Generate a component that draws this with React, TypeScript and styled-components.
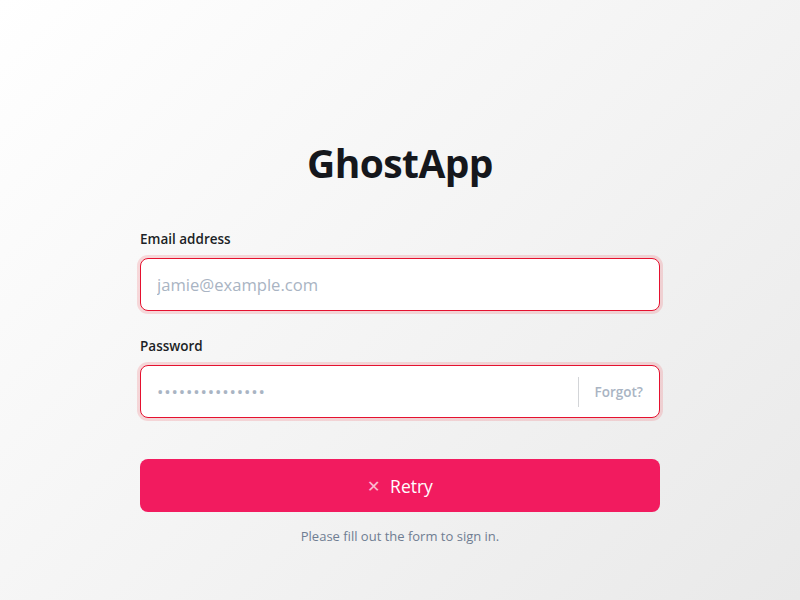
import React from "react";
import styled, { createGlobalStyle } from "styled-components";

const Global = createGlobalStyle`
  html, body { margin: 0; padding: 0; height: 100%; }
  body {
    background: linear-gradient(135deg, #ffffff 0%, #f4f4f4 50%, #e9e9e9 100%);
    font-family: "Segoe UI", "Open Sans", "Noto Sans", sans-serif;
    min-height: 600px;
  }
`;

const Page = styled.div`
  width: 800px;
  height: 600px;
  display: flex;
  justify-content: center;
`;

const Form = styled.form`
  width: 520px;
  padding-top: 139px;
  display: flex;
  flex-direction: column;
`;

const Title = styled.h1`
  margin: 0 0 42px;
  font-size: 39px;
  line-height: 48px;
  font-weight: 700;
  text-align: center;
  color: #15171c;
  letter-spacing: -0.6px;
`;

const Field = styled.div<{ $gap?: number }>`
  display: flex;
  flex-direction: column;
  gap: 9px;
  margin-bottom: ${(p) => p.$gap ?? 25}px;
`;

const Label = styled.label`
  font-size: 13.5px;
  line-height: 20px;
  font-weight: 600;
  color: #1c1f26;
`;

const InputBox = styled.div`
  height: 53px;
  box-sizing: border-box;
  border: 1px solid #e5112f;
  border-radius: 8px;
  background: #fff;
  box-shadow: 0 0 0 3px rgba(239, 68, 80, 0.18);
  display: flex;
  align-items: center;
`;

const Input = styled.input<{ $dots?: boolean }>`
  flex: 1;
  min-width: 0;
  height: 100%;
  border: none;
  outline: none;
  background: transparent;
  padding: 0 16px;
  font-family: inherit;
  font-size: 16.6px;
  color: #1c1f26;
  letter-spacing: ${(p) => (p.$dots ? "0.85px" : "0")};
  &::placeholder {
    color: #a9b4c3;
    font-size: ${(p) => (p.$dots ? "17px" : "16.6px")};
  }
`;

const Divider = styled.span`
  width: 1px;
  height: 30px;
  background: #d3d5d8;
`;

const Forgot = styled.a`
  padding: 0 16px;
  font-size: 13.5px;
  font-weight: 600;
  color: #a9b4c3;
  text-decoration: none;
  cursor: pointer;
`;

const Button = styled.button`
  margin-top: 16px;
  height: 53px;
  border: none;
  border-radius: 8px;
  background: #f21b5f;
  color: #fff;
  font-family: inherit;
  font-size: 17.5px;
  display: flex;
  align-items: center;
  justify-content: center;
  gap: 10px;
  cursor: pointer;
`;

const XMark = styled.span`
  font-size: 16px;
  opacity: 0.7;
  line-height: 1;
`;

const Helper = styled.p`
  margin: 14px 0 0;
  font-size: 13px;
  line-height: 20px;
  text-align: center;
  color: #6f7d92;
`;

export default function App() {
  return (
    <>
      <Global />
      <Page>
        <Form onSubmit={(e) => e.preventDefault()}>
          <Title>GhostApp</Title>
          <Field>
            <Label>Email address</Label>
            <InputBox>
              <Input placeholder="jamie@example.com" />
            </InputBox>
          </Field>
          <Field>
            <Label>Password</Label>
            <InputBox>
              <Input $dots placeholder="•••••••••••••••" />
              <Divider />
              <Forgot>Forgot?</Forgot>
            </InputBox>
          </Field>
          <Button type="submit">
            <XMark>✕</XMark>
            <span>Retry</span>
          </Button>
          <Helper>Please fill out the form to sign in.</Helper>
        </Form>
      </Page>
    </>
  );
}
